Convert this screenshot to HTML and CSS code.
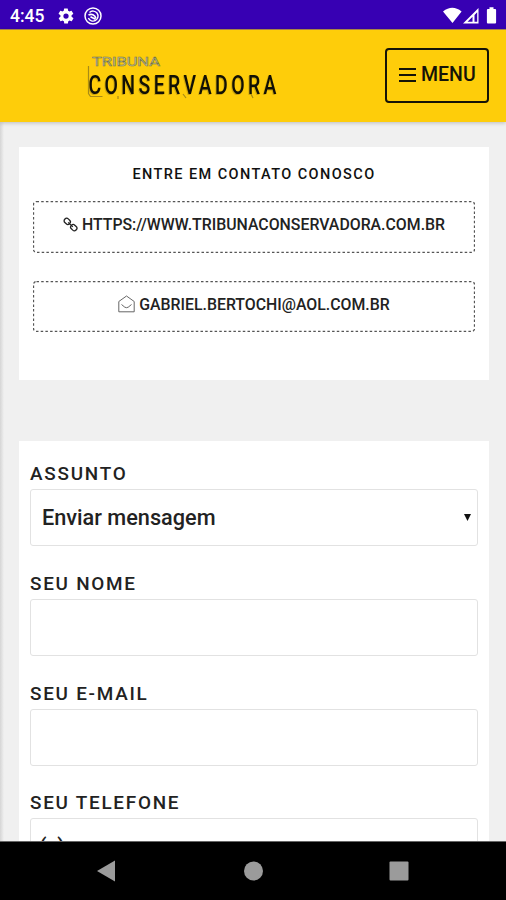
FILE: index.html
```html
<!DOCTYPE html>
<html lang="pt-BR">
<head>
<meta charset="utf-8">
<title>Tribuna Conservadora</title>
<link rel="stylesheet" href="styles.css">
</head>
<body>
<div class="status">
  <span class="time">4:45</span>
  <svg class="gear" width="18" height="18" viewBox="0 0 24 24"><path fill="#fff" fill-rule="evenodd" d="M19.4 13a7 7 0 0 0 0-2l2.1-1.6a.5.5 0 0 0 .1-.6l-2-3.5a.5.5 0 0 0-.6-.2l-2.5 1a7 7 0 0 0-1.7-1l-.4-2.7a.5.5 0 0 0-.5-.4h-4a.5.5 0 0 0-.5.4l-.4 2.7a7 7 0 0 0-1.7 1l-2.5-1a.5.5 0 0 0-.6.2l-2 3.5a.5.5 0 0 0 .1.6L4.6 11a7 7 0 0 0 0 2l-2.1 1.6a.5.5 0 0 0-.1.6l2 3.5c.1.2.4.3.6.2l2.5-1a7 7 0 0 0 1.7 1l.4 2.7c0 .2.2.4.5.4h4c.3 0 .5-.2.5-.4l.4-2.7a7 7 0 0 0 1.7-1l2.5 1c.2.1.5 0 .6-.2l2-3.5a.5.5 0 0 0-.1-.6zM12 15.5a3.5 3.5 0 1 1 0-7 3.5 3.5 0 0 1 0 7z"/></svg>
  <svg class="app" width="18" height="18" viewBox="0 0 18 18" fill="none" stroke="#fff"><circle cx="9" cy="9" r="8" stroke-width="1.5"/><path d="M5.5 5.5A5 5 0 1 1 4.4 11" stroke-width="1.4"/><path d="M4.5 8c3-1.600 6.500-.2 7.500 3.500M6.500 9.700l5 2.600" stroke-width="1.7"/></svg>
  <svg class="signals" width="55" height="18" viewBox="0 0 55 18"><path fill="#fff" d="M0 4.500Q9.300-3 18.600 4.500L9.500 16zM20 16.500 35.500 1v15.500zM46.500 2V.3h4V2h1.600q1 0 1 1v12.500q0 1-1 1h-7.200q-1 0-1-1V3q0-1 1-1z"/><path fill="#3700b3" d="M24.500 14.800 29.500 9.800v5zM31.500 8 34.200 5.300v9.500h-2.700z"/></svg>
</div>
<header class="header">
  <svg class="logo" width="210" height="58" viewBox="0 0 210 58">
    <text class="small" x="7" y="16" textLength="68" lengthAdjust="spacingAndGlyphs">TRIBUNA</text>
    <path d="M3.500 16v27.500l2 3h12M33 46v3M98 44l3 4M166 44l2 4" fill="none" stroke="#a88b16" stroke-width="1.2"/>
    <g transform="translate(3.5 0) scale(.78 1)">
      <text class="main" x="0" y="44.5" textLength="241">CONSERVADORA</text>
    </g>
  </svg>
  <button class="menu"><svg width="17" height="16" viewBox="0 0 17 16"><path d="M0 2h17M0 8h17M0 14h17" stroke="#151307" stroke-width="2"/></svg><span>MENU</span></button>
</header>
<main class="page">
  <section class="card contact">
    <h1>ENTRE EM CONTATO CONOSCO</h1>
    <a class="link url"><svg class="dash" width="442" height="52"><rect x=".5" y=".5" width="441" height="51" rx="3"/></svg><svg width="15" height="15" viewBox="0 0 15 15" fill="none" stroke="#222" stroke-width="1.3"><rect x="1" y="1.8" width="6.5" height="5" rx="2.3" transform="rotate(43 4.2 4.3)"/><rect x="7.5" y="8.2" width="6.5" height="5" rx="2.3" transform="rotate(43 10.8 10.7)"/><path d="m5.200 5.400 4.600 4.500"/></svg><span>HTTPS://WWW.TRIBUNACONSERVADORA.COM.BR</span></a>
    <a class="link mail"><svg class="dash" width="442" height="51"><rect x=".5" y=".5" width="441" height="50" rx="3"/></svg><svg width="17" height="18" viewBox="0 0 17 18" fill="none" stroke="#666" stroke-width="1"><path d="M.8 6.500 8.500 1l7.700 5.500v10.300H.8zM3.500 9.500l3.300 2.700q1.700 1 3.400 0l3.300-2.700"/></svg><span>GABRIEL.BERTOCHI@AOL.COM.BR</span></a>
  </section>
  <form class="card form">
    <div class="field"><label>ASSUNTO</label><div class="box select"><span>Enviar mensagem</span><svg width="7" height="7" viewBox="0 0 7 7"><path d="M0 0h7L3.500 7z" fill="#111"/></svg></div></div>
    <div class="field"><label>SEU NOME</label><div class="box"></div></div>
    <div class="field"><label>SEU E-MAIL</label><div class="box"></div></div>
    <div class="field"><label>SEU TELEFONE</label><div class="box phone">(&nbsp;&nbsp;)</div></div>
  </form>
</main>
<nav class="nav">
  <svg width="506" height="58" viewBox="0 0 506 58" fill="#9b9b9b"><path d="M97 29 115 18.500v21z"/><circle cx="253.5" cy="29" r="9.5"/><rect x="389.5" y="19.5" width="19" height="19" rx="1"/></svg>
</nav>
</body>
</html>
```
FILE: styles.css
```css
* { box-sizing: border-box; }
body { margin: 0; height: 900px; display: flex; flex-direction: column; overflow: hidden; font-family: Roboto, sans-serif; font-weight: 500; color: #222; background: #f0f0f0; }
svg { display: block; flex: none; }
.status { height: 29px; flex: none; background: #3700b3; display: flex; align-items: center; padding: 2px 8px 0 10px; color: #fff; }
.time { font-size: 17.5px; width: 47px; white-space: nowrap; }
.app { margin-left: 9px; }
.signals { margin-left: auto; }
.header { height: 93px; flex: none; background: #fecd0a; border-top: 1px solid #a88446; display: flex; align-items: flex-start; justify-content: space-between; padding: 17px 17px 0 85px; box-shadow: 0 1px 4px rgba(0,0,0,.22); position: relative; z-index: 1; }
.logo { margin-top: 3px; }
.small { font: 400 13px Roboto, sans-serif; fill: #dedca8; stroke: #777546; stroke-width: .6px; }
.main { font: 500 25px Roboto, sans-serif; fill: #111005; filter: drop-shadow(-1px 1.5px 0 #c79f0d); }
.menu { width: 104px; height: 55px; margin-top: 1px; border: 2px solid #151307; border-radius: 4px; background: transparent; padding: 0 0 2px 12px; display: flex; align-items: center; gap: 5px; font: 500 19.5px Roboto, sans-serif; color: #151307; }
.page { height: 719px; flex: none; overflow: hidden; padding: 25px 17px 0 19px; background: linear-gradient(90deg, #d5d5d5, #f0f0f0 4px); }
.card { background: #fff; }
.contact { height: 233px; padding: 19px 14px 0; }
h1 { margin: 0 0 17px; font-size: 14.5px; line-height: 18px; font-weight: 500; letter-spacing: 1.42px; text-align: center; color: #111; white-space: nowrap; }
.link { display: flex; position: relative; justify-content: center; align-items: center; font-size: 15.85px; white-space: nowrap; gap: 4px; }
.dash { position: absolute; inset: 0; fill: none; stroke: #555; stroke-width: 1.3px; stroke-dasharray: 2.5 2.2; }
.url { height: 52px; padding-bottom: 5px; }
.mail { height: 51px; margin-top: 28px; padding-bottom: 5px; }
.form { margin-top: 61px; height: 460px; padding: 23px 11px 0; }
.field { height: 109.8px; }
label { display: block; height: 25px; line-height: 20px; font-size: 18.9px; letter-spacing: 1.75px; white-space: nowrap; }
.box { height: 57px; border: 1.5px solid #e2e2e2; border-radius: 3px; display: flex; align-items: center; justify-content: space-between; padding: 0 6px 1px 11px; font-size: 21.7px; }
.phone { padding-left: 8px; }
.nav { height: 59px; flex: none; background: #000; border-top: 1px solid #666; }
```
